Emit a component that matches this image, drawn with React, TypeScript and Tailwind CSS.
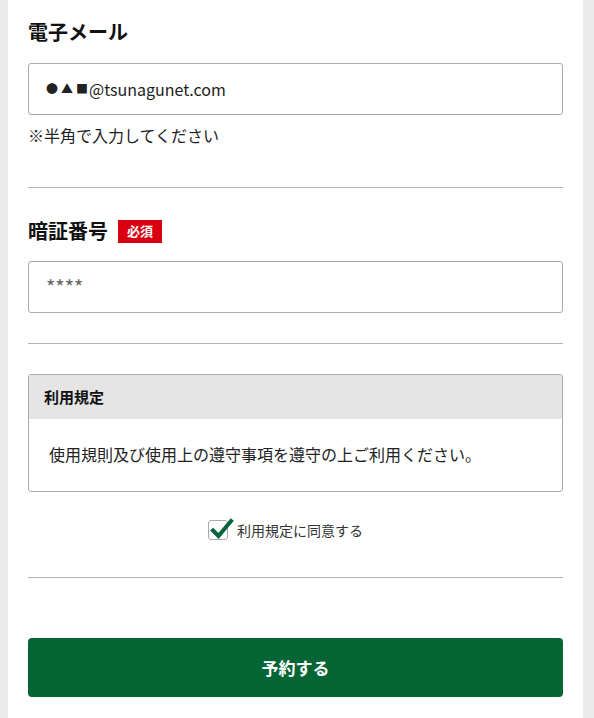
function CheckIcon() {
  return (
    <svg
      className="absolute -top-[4px] left-[1px]"
      width="24"
      height="24"
      viewBox="0 0 24 24"
      fill="none"
    >
      <path
        d="M3 13.5 L8.5 19 L21 4"
        stroke="#06643a"
        strokeWidth="4"
        strokeLinecap="square"
        strokeLinejoin="miter"
      />
    </svg>
  );
}

export default function App() {
  return (
    <div
      className="min-h-screen bg-[#ebebeb] pl-[8px] pr-[11px]"
      style={{ fontFamily: '"Noto Sans CJK JP", "Noto Sans", sans-serif' }}
    >
      <main className="h-[718px] overflow-hidden bg-white px-[20px] pt-[18px] text-[#222]">
        {/* email */}
        <h2 className="text-[20px] leading-[28px] font-bold text-[#111]">電子メール</h2>
        <div className="mt-[17px] flex h-[52px] items-center rounded-[3px] border border-[#a9a9a9] px-[17px] text-[16px]">
          <span className="text-[12px] tracking-[3px]">●▲</span>
          <span className="mr-[1px] text-[12px]">■</span>
          <span>@tsunagunet.com</span>
        </div>
        <p className="mt-[8px] text-[16px] leading-[24px]">※半角で入力してください</p>

        <hr className="mt-[40px] border-t border-[#b3b3b3]" />

        {/* pin */}
        <div className="mt-[29px] flex h-[28px] items-center gap-[10px]">
          <h2 className="text-[20px] leading-[28px] font-bold text-[#111]">暗証番号</h2>
          <span className="flex h-[23px] w-[44px] items-center justify-center bg-[#d9000f] text-[13px] font-bold text-white">
            必須
          </span>
        </div>
        <div className="mt-[16px] flex h-[52px] items-center rounded-[3px] border border-[#a9a9a9] px-[17px] text-[20px] tracking-[0px] text-[#666]">
          ****
        </div>

        <hr className="mt-[30px] border-t border-[#b3b3b3]" />

        {/* terms */}
        <section className="mt-[30px] overflow-hidden rounded-[3px] border border-[#a9a9a9]">
          <div className="flex h-[44px] items-center bg-[#e5e5e5] px-[15px] text-[15px] font-bold text-[#111]">
            利用規定
          </div>
          <div className="flex h-[72px] items-center px-[20px] pb-[3px] text-[16px]">
            使用規則及び使用上の遵守事項を遵守の上ご利用ください。
          </div>
        </section>

        <label className="mt-[26px] flex h-[24px] items-center justify-center gap-[9px] pr-[20px] text-[14px] text-[#333]">
          <span className="relative h-[20px] w-[20px] rounded-[3px] border border-[#a9a9a9] bg-white">
            <CheckIcon />
          </span>
          <span>利用規定に同意する</span>
        </label>

        <hr className="mt-[35px] border-t border-[#b3b3b3]" />

        <button className="mt-[60px] flex h-[59px] w-full items-center justify-center rounded-[4px] bg-[#066535] text-[17px] font-bold text-white">
          予約する
        </button>
      </main>
    </div>
  );
}
